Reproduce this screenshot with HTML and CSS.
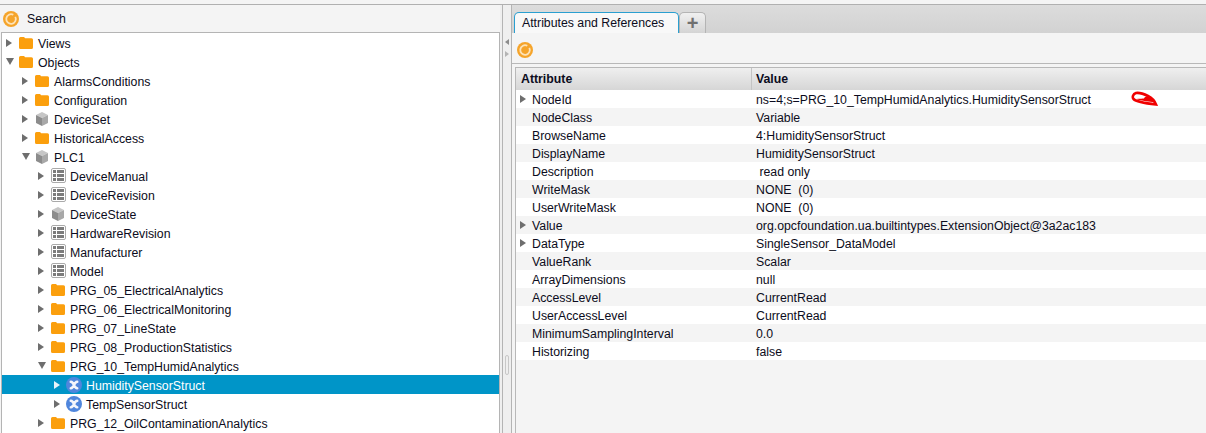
FILE: index.html
```html
<!DOCTYPE html>
<html lang="en">
<head>
  <meta charset="UTF-8" />
  <title>OPC UA Browser</title>
  <link rel="stylesheet" href="styles.css">
</head>
<body>
  <svg class="defs" width="0" height="0">
    <symbol id="folder" viewBox="0 0 14 12">
      <path d="M0 1.500Q0 0 1.500 0H5L6.200 1.200H12.500Q14 1.200 14 2.700V10.500Q14 12 12.500 12H1.500Q0 12 0 10.500Z" fill="#fb9f0d"/>
    </symbol>
    <symbol id="cube" viewBox="0 0 12 14">
      <path d="M6 0L12 3L6 6L0 3Z" fill="#c6c6c6"/>
      <path d="M0 3L6 6V14L0 11Z" fill="#8c8c8c"/>
      <path d="M12 3L6 6V14L12 11Z" fill="#a8a8a8"/>
    </symbol>
    <symbol id="table" viewBox="0 0 15 15">
      <rect x=".5" y=".5" width="14" height="14" rx="1.500" fill="#fff" stroke="#aaaaaa"/>
      <path d="M2 2H5V5H2ZM6 2H13V5H6ZM2 6H5V9H2ZM6 6H13V9H6ZM2 10H5V13H2ZM6 10H13V13H6Z" fill="#7c7c7c"/>
    </symbol>
    <symbol id="variable" viewBox="0 0 16 16">
      <circle cx="8" cy="8" r="8" fill="#4f86dc"/>
      <path d="M4.800 4.800Q6.800 5 8 8T11.200 11.200M11.200 4.800Q9.200 5 8 8T4.800 11.200" fill="none" stroke="#f4f6fb" stroke-width="2.600" stroke-linecap="round"/>
    </symbol>
    <symbol id="refresh" viewBox="0 0 16 16">
      <circle cx="8" cy="8" r="8" fill="#f5a42a"/>
      <path d="M10.300 3.800A4.800 4.800 0 1 0 12.300 5.800" fill="none" stroke="#fde3b8" stroke-width="1.800"/>
      <circle cx="8" cy="8" r="2.600" fill="#f5a42a"/>
    </symbol>
  </svg>

  <div class="app">
    <section class="left">
      <div class="search-bar">
        <svg class="ico-16"><use href="#refresh"/></svg>
        <span>Search</span>
      </div>
      <div class="tree">
        <div class="row lv0"><i class="arrow"></i><svg class="ico folder"><use href="#folder"/></svg><span class="lbl">Views</span></div>
        <div class="row lv0"><i class="arrow open"></i><svg class="ico folder"><use href="#folder"/></svg><span class="lbl">Objects</span></div>
        <div class="row lv1"><i class="arrow"></i><svg class="ico folder"><use href="#folder"/></svg><span class="lbl">AlarmsConditions</span></div>
        <div class="row lv1"><i class="arrow"></i><svg class="ico folder"><use href="#folder"/></svg><span class="lbl">Configuration</span></div>
        <div class="row lv1"><i class="arrow"></i><svg class="ico cube"><use href="#cube"/></svg><span class="lbl">DeviceSet</span></div>
        <div class="row lv1"><i class="arrow"></i><svg class="ico folder"><use href="#folder"/></svg><span class="lbl">HistoricalAccess</span></div>
        <div class="row lv1"><i class="arrow open"></i><svg class="ico cube"><use href="#cube"/></svg><span class="lbl">PLC1</span></div>
        <div class="row lv2"><i class="arrow"></i><svg class="ico tbl"><use href="#table"/></svg><span class="lbl">DeviceManual</span></div>
        <div class="row lv2"><i class="arrow"></i><svg class="ico tbl"><use href="#table"/></svg><span class="lbl">DeviceRevision</span></div>
        <div class="row lv2"><i class="arrow"></i><svg class="ico cube"><use href="#cube"/></svg><span class="lbl">DeviceState</span></div>
        <div class="row lv2"><i class="arrow"></i><svg class="ico tbl"><use href="#table"/></svg><span class="lbl">HardwareRevision</span></div>
        <div class="row lv2"><i class="arrow"></i><svg class="ico tbl"><use href="#table"/></svg><span class="lbl">Manufacturer</span></div>
        <div class="row lv2"><i class="arrow"></i><svg class="ico tbl"><use href="#table"/></svg><span class="lbl">Model</span></div>
        <div class="row lv2"><i class="arrow"></i><svg class="ico folder"><use href="#folder"/></svg><span class="lbl">PRG_05_ElectricalAnalytics</span></div>
        <div class="row lv2"><i class="arrow"></i><svg class="ico folder"><use href="#folder"/></svg><span class="lbl">PRG_06_ElectricalMonitoring</span></div>
        <div class="row lv2"><i class="arrow"></i><svg class="ico folder"><use href="#folder"/></svg><span class="lbl">PRG_07_LineState</span></div>
        <div class="row lv2"><i class="arrow"></i><svg class="ico folder"><use href="#folder"/></svg><span class="lbl">PRG_08_ProductionStatistics</span></div>
        <div class="row lv2"><i class="arrow open"></i><svg class="ico folder"><use href="#folder"/></svg><span class="lbl">PRG_10_TempHumidAnalytics</span></div>
        <div class="row lv3 selected"><i class="arrow"></i><svg class="ico var"><use href="#variable"/></svg><span class="lbl">HumiditySensorStruct</span></div>
        <div class="row lv3"><i class="arrow"></i><svg class="ico var"><use href="#variable"/></svg><span class="lbl">TempSensorStruct</span></div>
        <div class="row lv2"><i class="arrow"></i><svg class="ico folder"><use href="#folder"/></svg><span class="lbl">PRG_12_OilContaminationAnalytics</span></div>
      </div>
    </section>

    <div class="splitter">
      <i class="nub nub-left"></i>
      <i class="nub nub-right"></i>
      <i class="grip"></i>
    </div>

    <section class="right">
      <div class="tabs">
        <div class="tab active"><span>Attributes and References</span></div>
        <div class="tab add">+</div>
      </div>
      <div class="toolbar">
        <svg class="ico-16"><use href="#refresh"/></svg>
      </div>
      <div class="table">
        <div class="thead">
          <div class="c1"><span>Attribute</span></div>
          <div class="c2"><span>Value</span></div>
        </div>
        <div class="tr"><div class="c1"><i class="arrow"></i><span class="lbl">NodeId</span></div><div class="c2 lbl">ns=4;s=PRG_10_TempHumidAnalytics.HumiditySensorStruct</div></div>
        <div class="tr"><div class="c1"><span class="lbl">NodeClass</span></div><div class="c2 lbl">Variable</div></div>
        <div class="tr"><div class="c1"><span class="lbl">BrowseName</span></div><div class="c2 lbl">4:HumiditySensorStruct</div></div>
        <div class="tr"><div class="c1"><span class="lbl">DisplayName</span></div><div class="c2 lbl">HumiditySensorStruct</div></div>
        <div class="tr"><div class="c1"><span class="lbl">Description</span></div><div class="c2 lbl">&nbsp;read only</div></div>
        <div class="tr"><div class="c1"><span class="lbl">WriteMask</span></div><div class="c2 lbl">NONE&nbsp; (0)</div></div>
        <div class="tr"><div class="c1"><span class="lbl">UserWriteMask</span></div><div class="c2 lbl">NONE&nbsp; (0)</div></div>
        <div class="tr"><div class="c1"><i class="arrow"></i><span class="lbl">Value</span></div><div class="c2 lbl">org.opcfoundation.ua.builtintypes.ExtensionObject@3a2ac183</div></div>
        <div class="tr"><div class="c1"><i class="arrow"></i><span class="lbl">DataType</span></div><div class="c2 lbl">SingleSensor_DataModel</div></div>
        <div class="tr"><div class="c1"><span class="lbl">ValueRank</span></div><div class="c2 lbl">Scalar</div></div>
        <div class="tr"><div class="c1"><span class="lbl">ArrayDimensions</span></div><div class="c2 lbl">null</div></div>
        <div class="tr"><div class="c1"><span class="lbl">AccessLevel</span></div><div class="c2 lbl">CurrentRead</div></div>
        <div class="tr"><div class="c1"><span class="lbl">UserAccessLevel</span></div><div class="c2 lbl">CurrentRead</div></div>
        <div class="tr"><div class="c1"><span class="lbl">MinimumSamplingInterval</span></div><div class="c2 lbl">0.0</div></div>
        <div class="tr"><div class="c1"><span class="lbl">Historizing</span></div><div class="c2 lbl">false</div></div>
      </div>
      <!-- red pen mark over the NodeId row -->
      <svg class="scribble" width="28" height="16" viewBox="0 0 28 16">
        <path d="M5 2C2 3 1 6 2.500 8C5 10.500 12 12 25 13.500C24 11 21 7 17 5C13 3 8 1.500 5 2Z" fill="none" stroke="#f00000" stroke-width="2.600"/>
        <path d="M5 8C9 7.600 12 7.400 13 7.400C14 4.500 19 5 21 7.500C23 9 23.500 10 23 11C19 11 11 10 5 8Z" fill="#f00000"/>
      </svg>
    </section>
  </div>
</body>
</html>
```

FILE: styles.css
```css
html, body {
  margin: 0;
  height: 433px;
  overflow: hidden;
}
body {
  font-family: 'Liberation Sans', Arial, sans-serif;
  font-size: 12.3px;
  color: #0c0c20;
  background: #f4f4f4;
}
.defs {
  position: absolute;
}
.lbl {
  padding-top: 2px;
}
.app {
  display: flex;
  box-sizing: border-box;
  height: 429px;
  margin-top: 4px;
  border-top: 1px solid #b0b0b0;
}

/* left pane */
.left {
  width: 500px;
  flex: none;
  display: flex;
  flex-direction: column;
}
.search-bar {
  height: 27px;
  flex: none;
  display: flex;
  align-items: center;
  gap: 8px;
  padding-left: 3px;
  background: #f4f4f4;
}
.ico-16 {
  width: 16px;
  height: 16px;
  flex: none;
}
.tree {
  flex: 1;
  margin-left: 1px;
  background: #fff;
  border: 1px solid #b4b4b4;
  border-bottom: none;
  overflow: hidden;
}
.row {
  height: 19px;
  display: flex;
  align-items: center;
  white-space: nowrap;
}
.ico {
  flex: none;
}
.folder {
  width: 14px;
  height: 12px;
  margin-right: 5px;
}
.cube {
  width: 12px;
  height: 14px;
  margin: 0 6px 0 1px;
}
.tbl {
  width: 15px;
  height: 15px;
  margin-right: 4px;
}
.var {
  width: 16px;
  height: 16px;
  margin: 0 4px 0 -1px;
}
.lv0 { padding-left: 4px; }
.lv1 { padding-left: 20px; }
.lv2 { padding-left: 36px; }
.lv3 { padding-left: 52px; }
.row.selected {
  background: #0095c8;
  color: #fff;
}
.arrow {
  display: inline-block;
  flex: none;
  width: 0;
  height: 0;
  margin-right: 7px;
  border-top: 4px solid transparent;
  border-bottom: 4px solid transparent;
  border-left: 6px solid #6e6e6e;
}
.arrow.open {
  margin-right: 5px;
  border-left: 4px solid transparent;
  border-right: 4px solid transparent;
  border-top: 7px solid #6e6e6e;
  border-bottom: none;
}
.selected .arrow {
  border-left-color: #e8f4fa;
}

/* splitter */
.splitter {
  width: 12px;
  flex: none;
  position: relative;
  box-sizing: border-box;
  background: #efefef;
}
.splitter::before,
.splitter::after {
  content: "";
  position: absolute;
  top: 0;
  bottom: 0;
  width: 1px;
  background: #b4b4b4;
}
.splitter::before { left: 2px; }
.splitter::after { left: 11px; }
.nub {
  position: absolute;
  left: 5px;
  width: 0;
  height: 0;
  border-top: 3px solid transparent;
  border-bottom: 3px solid transparent;
}
.nub-left { top: 34px; border-right: 4px solid #8c8c8c; }
.nub-right { top: 46px; border-left: 4px solid #b4b4b4; }
.grip {
  position: absolute;
  left: 5px;
  top: 350px;
  width: 2px;
  height: 18px;
  border: 1px solid #c8c8c8;
  border-radius: 2px;
}

/* right pane */
.right {
  flex: 1;
  position: relative;
  display: flex;
  flex-direction: column;
  min-width: 0;
}
.tabs {
  height: 28px;
  flex: none;
  display: flex;
  align-items: flex-end;
  padding-left: 2px;
  box-sizing: border-box;
  background: linear-gradient(#dcdcdc, #d2d2d2);
}
.tab {
  height: 21px;
  box-sizing: border-box;
  display: flex;
  align-items: center;
  border-radius: 5px 5px 0 0;
}
.tab.active {
  width: 165px;
  padding-left: 7px;
  background: #f8f8f8;
  border: 1px solid #2a9fd0;
  border-bottom: none;
}
.tab.add {
  width: 27px;
  justify-content: center;
  font-size: 20px;
  font-weight: bold;
  color: #707070;
  background: linear-gradient(#f0f0f0, #d4d4d4);
  border: 1px solid #b4b4b4;
  border-bottom: none;
}
.toolbar {
  height: 31px;
  flex: none;
  display: flex;
  align-items: center;
  padding: 3px 0 0 5px;
  box-sizing: border-box;
  border-bottom: 1px solid #b8b8b8;
  background: #f4f4f4;
}
.table {
  flex: 1;
  margin: 3px 0 0 3px;
  border-top: 1px solid #b8b8b8;
  border-left: 1px solid #b8b8b8;
  background: #f4f4f4;
}
.thead {
  height: 22px;
  display: flex;
  align-items: center;
  font-weight: bold;
  background: linear-gradient(#efefef, #d6d6d6);
}
.thead .c1 {
  height: 100%;
  display: flex;
  align-items: center;
  box-sizing: border-box;
  padding-left: 5px;
  border-right: 1px solid #c4c4c4;
}
.thead .c2 { padding-left: 4px; }
.c1 { width: 236px; flex: none; }
.tr {
  height: 18px;
  display: flex;
  align-items: center;
  background: #fff;
  white-space: nowrap;
}
.tr:nth-child(odd) {
  background: #f4f4f4;
}
.tr .c1 {
  display: flex;
  align-items: center;
  padding-left: 16px;
  box-sizing: border-box;
  position: relative;
}
.tr .arrow {
  position: absolute;
  left: 4px;
  margin: 0;
}
.tr .c2 { padding-left: 4px; }
.scribble {
  position: absolute;
  left: 619px;
  top: 86px;
}
```
